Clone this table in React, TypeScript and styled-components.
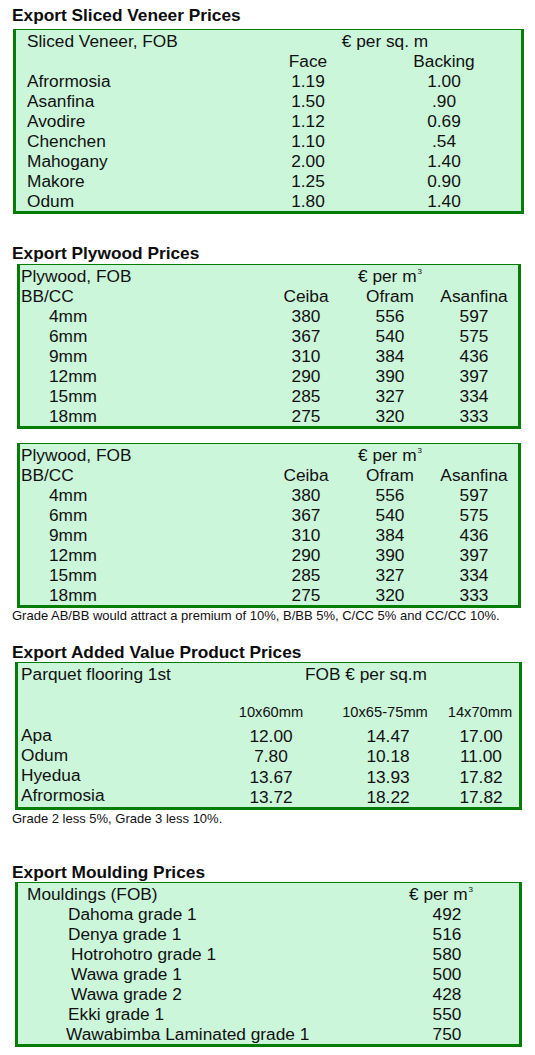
import React from 'react';
import styled, { createGlobalStyle } from 'styled-components';

const GlobalStyle = createGlobalStyle`
  body {
    margin: 0;
    background: #ffffff;
    font-family: "Liberation Sans", Arial, sans-serif;
    color: #111111;
  }
`;

const Page = styled.div`
  width: 535px;
  padding-top: 5px;
`;

const Title = styled.h2<{ $top: number }>`
  margin: ${(p) => p.$top}px 0 0 0;
  padding-left: 12px;
  font-size: 17.3px;
  font-weight: bold;
  line-height: 20px;
  color: #0d0d0d;
`;

const PriceBox = styled.div<{ $left: number; $width: number; $top: number; $bottom?: number }>`
  box-sizing: border-box;
  margin: ${(p) => p.$top}px 0 0 ${(p) => p.$left}px;
  width: ${(p) => p.$width}px;
  background: #ccf6da;
  border: 3px solid #067d06;
  border-top-width: 1px;
  padding: 1px 0 ${(p) => p.$bottom ?? 0}px;
`;

const Row = styled.div<{ $cols: string; $h?: number; $size?: number }>`
  display: grid;
  grid-template-columns: ${(p) => p.$cols};
  align-items: center;
  height: ${(p) => p.$h ?? 20}px;
  font-size: ${(p) => p.$size ?? 17.3}px;
  line-height: 20px;
  white-space: nowrap;
`;

const Label = styled.div<{ $indent: number }>`
  padding-left: ${(p) => p.$indent}px;
`;

const Cell = styled.div<{ $span?: number; $dy?: number; $dx?: number }>`
  grid-column: span ${(p) => p.$span ?? 1};
  text-align: center;
  padding-top: ${(p) => (p.$dy ?? 0) * 2}px;
  padding-right: ${(p) => (p.$dx ?? 0) * 2}px;
`;

const Sup = styled.sup`
  font-size: 8px;
  line-height: 0;
  vertical-align: 8px;
  margin-left: 1px;
`;

const Note = styled.p<{ $top: number }>`
  margin: ${(p) => p.$top}px 0 0 12px;
  font-size: 13px;
  line-height: 16px;
`;

const veneer = [
  ['Afrormosia', '1.19', '1.00'],
  ['Asanfina', '1.50', '.90'],
  ['Avodire', '1.12', '0.69'],
  ['Chenchen', '1.10', '.54'],
  ['Mahogany', '2.00', '1.40'],
  ['Makore', '1.25', '0.90'],
  ['Odum', '1.80', '1.40'],
];

const plywood = [
  ['4mm', '380', '556', '597'],
  ['6mm', '367', '540', '575'],
  ['9mm', '310', '384', '436'],
  ['12mm', '290', '390', '397'],
  ['15mm', '285', '327', '334'],
  ['18mm', '275', '320', '333'],
];

const parquet = [
  ['Apa', '12.00', '14.47', '17.00'],
  ['Odum', '7.80', '10.18', '11.00'],
  ['Hyedua', '13.67', '13.93', '17.82'],
  ['Afrormosia', '13.72', '18.22', '17.82'],
];

const mouldings: [string, string, number][] = [
  ['Dahoma grade 1', '492', 50],
  ['Denya grade 1', '516', 50],
  ['Hotrohotro grade 1', '580', 53],
  ['Wawa grade 1', '500', 53],
  ['Wawa grade 2', '428', 53],
  ['Ekki grade 1', '550', 50],
  ['Wawabimba Laminated grade 1', '750', 48],
];

const VENEER_COLS = '1fr 118px 154px';
const PLY_COLS = '1fr 88px 80px 88px';
const PARQ_HEAD = '1fr 116px 112px 78px';
const PARQ_DATA = '1fr 124px 110px 76px';
const MOULD_COLS = '1fr 144px';

const PlywoodTable: React.FC<{ top: number }> = ({ top }) => (
  <PriceBox $left={17} $width={504} $top={top}>
    <Row $cols={PLY_COLS}>
      <Label $indent={1}>Plywood, FOB</Label>
      <span />
      <Cell>
        € per m<Sup>3</Sup>
      </Cell>
    </Row>
    <Row $cols={PLY_COLS}>
      <Label $indent={1}>BB/CC</Label>
      <Cell>Ceiba</Cell>
      <Cell>Ofram</Cell>
      <Cell>Asanfina</Cell>
    </Row>
    {plywood.map(([size, ceiba, ofram, asanfina]) => (
      <Row key={size} $cols={PLY_COLS}>
        <Label $indent={29}>{size}</Label>
        <Cell>{ceiba}</Cell>
        <Cell>{ofram}</Cell>
        <Cell>{asanfina}</Cell>
      </Row>
    ))}
  </PriceBox>
);

const App: React.FC = () => (
  <Page>
    <GlobalStyle />

    <Title $top={0}>Export Sliced Veneer Prices</Title>
    <PriceBox $left={13} $width={511} $top={4}>
      <Row $cols={VENEER_COLS}>
        <Label $indent={11}>Sliced Veneer, FOB</Label>
        <Cell $span={2}>€ per sq. m</Cell>
      </Row>
      <Row $cols={VENEER_COLS}>
        <span />
        <Cell>Face</Cell>
        <Cell>Backing</Cell>
      </Row>
      {veneer.map(([name, face, backing]) => (
        <Row key={name} $cols={VENEER_COLS}>
          <Label $indent={11}>{name}</Label>
          <Cell>{face}</Cell>
          <Cell>{backing}</Cell>
        </Row>
      ))}
    </PriceBox>

    <Title $top={29}>Export Plywood Prices</Title>
    <PlywoodTable top={1} />
    <PlywoodTable top={14} />
    <Note $top={0}>
      Grade AB/BB would attract a premium of 10%, B/BB 5%, C/CC 5% and CC/CC 10%.
    </Note>

    <Title $top={18}>Export Added Value Product Prices</Title>
    <PriceBox $left={15} $width={507} $top={0} $bottom={3}>
      <Row $cols={PARQ_HEAD}>
        <Label $indent={3}>Parquet flooring 1st</Label>
        <Cell $span={3}>FOB € per sq.m</Cell>
      </Row>
      <Row $cols={PARQ_HEAD} $h={16} />
      <Row $cols={PARQ_HEAD} $h={23} $size={14.7}>
        <span />
        <Cell>10x60mm</Cell>
        <Cell>10x65-75mm</Cell>
        <Cell>14x70mm</Cell>
      </Row>
      {parquet.map(([name, a, b, c]) => (
        <Row key={name} $cols={PARQ_DATA} $h={20.3}>
          <Label $indent={3}>{name}</Label>
          <Cell $dy={1.5}>{a}</Cell>
          <Cell $dy={1.5}>{b}</Cell>
          <Cell $dy={1.5}>{c}</Cell>
        </Row>
      ))}
    </PriceBox>
    <Note $top={1}>Grade 2 less 5%, Grade 3 less 10%.</Note>

    <Title $top={35}>Export Moulding Prices</Title>
    <PriceBox $left={15} $width={507} $top={0}>
      <Row $cols={MOULD_COLS}>
        <Label $indent={9}>Mouldings (FOB)</Label>
        <Cell $dx={6}>
          € per m<Sup>3</Sup>
        </Cell>
      </Row>
      {mouldings.map(([name, price, indent]) => (
        <Row key={name} $cols={MOULD_COLS}>
          <Label $indent={indent}>{name}</Label>
          <Cell>{price}</Cell>
        </Row>
      ))}
    </PriceBox>
  </Page>
);

export default App;
